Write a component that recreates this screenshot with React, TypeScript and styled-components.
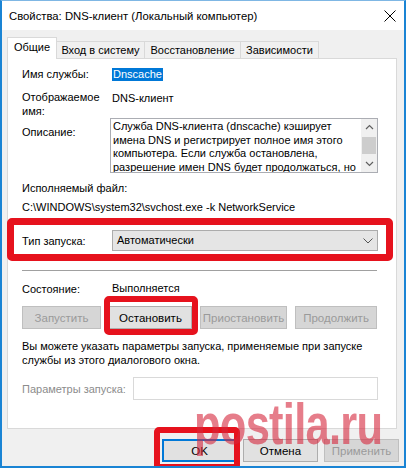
import React from "react";
import styled, { createGlobalStyle } from "styled-components";

const GlobalStyle = createGlobalStyle`
  html, body {
    margin: 0;
    padding: 0;
    background: #ffffff;
  }
  body {
    font-family: "Liberation Sans", Arial, sans-serif;
    font-size: 11px;
    color: #000000;
  }
`;

const Window = styled.div`
  position: relative;
  width: 406px;
  height: 468px;
  box-sizing: border-box;
  border: 2px solid #1a84d4;
  border-top: 1px solid #7fb7e4;
  background: #f0f0f0;
  display: flex;
  flex-direction: column;
  overflow: hidden;
`;

const TitleBar = styled.div`
  height: 29px;
  background: #ffffff;
  display: flex;
  align-items: center;
  justify-content: space-between;
  padding: 0 8px 0 7px;
  font-size: 11.3px;
  flex-shrink: 0;
`;

const CloseIcon = styled.svg`
  width: 12px;
  height: 12px;
  margin-top: 1px;
`;

const Body = styled.div`
  flex: 1;
  display: flex;
  flex-direction: column;
  padding: 7px 7px 0 5px;
`;

const TabStrip = styled.div`
  display: flex;
  align-items: flex-end;
  height: 21px;
  padding-left: 1px;
`;

const Tab = styled.div<{ $active?: boolean; $w: number }>`
  width: ${(p) => p.$w}px;
  height: ${(p) => (p.$active ? 22 : 17)}px;
  box-sizing: border-box;
  border: 1px solid #d9d9d9;
  border-bottom: none;
  margin-left: -1px;
  margin-bottom: ${(p) => (p.$active ? -1 : 0)}px;
  background: ${(p) => (p.$active ? "#ffffff" : "#f0f0f0")};
  position: relative;
  z-index: ${(p) => (p.$active ? 2 : 1)};
  display: flex;
  align-items: center;
  justify-content: center;
  padding-bottom: ${(p) => (p.$active ? 3 : 0)}px;
  white-space: nowrap;
`;

const Panel = styled.div`
  width: 390px;
  height: 371px;
  box-sizing: border-box;
  background: #ffffff;
  border: 1px solid #d9d9d9;
  padding: 8px 0 0 14px;
  display: flex;
  flex-direction: column;
`;

const Row = styled.div<{ $mt?: number; $align?: string }>`
  position: relative;
  display: flex;
  align-items: ${(p) => p.$align || "center"};
  margin-top: ${(p) => p.$mt || 0}px;
  line-height: 15px;
  white-space: nowrap;
`;

const Label = styled.div<{ $w?: number; $muted?: boolean; $pt?: number }>`
  width: ${(p) => (p.$w === undefined ? 90 : p.$w)}px;
  flex-shrink: 0;
  line-height: 14px;
  padding-top: ${(p) => p.$pt || 0}px;
  color: ${(p) => (p.$muted ? "#8c8c8c" : "#000000")};
`;

const Value = styled.span<{ $mt?: number }>`
  line-height: 14px;
  margin-top: ${(p) => p.$mt || 0}px;
`;

const Selected = styled.span`
  background: #0078d7;
  color: #ffffff;
  line-height: 13px;
  padding: 0 1px;
`;

const TextBox = styled.div`
  position: relative;
  width: 268px;
  height: 55px;
  box-sizing: border-box;
  margin-left: -2px;
  border: 1px solid #abadb3;
  padding: 1px 18px 0 2px;
  overflow: hidden;
  line-height: 13.5px;
`;

const ScrollBar = styled.div`
  position: absolute;
  top: 0;
  right: 0;
  bottom: 0;
  width: 16px;
  background: #f0f0f0;
  display: flex;
  flex-direction: column;
  align-items: center;
`;

const ScrollArrow = styled.svg`
  width: 9px;
  height: 16px;
  flex-shrink: 0;
`;

const ScrollTrack = styled.div`
  flex: 1;
  width: 100%;
  display: flex;
  flex-direction: column;
  align-items: center;
`;

const Thumb = styled.div`
  width: 14px;
  height: 17px;
  margin-top: 2px;
  background: #cdcdcd;
`;

const Separator = styled.div<{ $mt: number }>`
  height: 1px;
  width: 355px;
  background: #a0a0a0;
  margin-top: ${(p) => p.$mt}px;
`;

const Combo = styled.div`
  width: 266px;
  height: 21px;
  box-sizing: border-box;
  border: 1px solid #acacac;
  background: #e5e5e5;
  display: flex;
  align-items: center;
  justify-content: space-between;
  padding: 0 4px 0 4px;
`;

const Chevron = styled.svg`
  width: 10px;
  height: 6px;
`;

const Marked = styled.div<{ $t: number; $r: number; $b: number; $l: number; $bw: number }>`
  position: relative;
  display: flex;
  align-items: center;

  &::after {
    content: "";
    position: absolute;
    top: ${(p) => p.$t}px;
    right: ${(p) => p.$r}px;
    bottom: ${(p) => p.$b}px;
    left: ${(p) => p.$l}px;
    border: ${(p) => p.$bw}px solid #e6121d;
    border-radius: 5px;
    pointer-events: none;
    z-index: 5;
  }
`;

const ButtonRow = styled.div<{ $mt: number }>`
  display: flex;
  justify-content: space-between;
  width: 355px;
  margin-top: ${(p) => p.$mt}px;
`;

const Button = styled.div<{ $w: number; $disabled?: boolean; $default?: boolean }>`
  width: ${(p) => p.$w}px;
  height: 23px;
  box-sizing: border-box;
  border: 1px solid
    ${(p) => (p.$default ? "#0078d7" : p.$disabled ? "#bfbfbf" : "#adadad")};
  box-shadow: ${(p) => (p.$default ? "inset 0 0 0 1px #0078d7" : "none")};
  background: ${(p) => (p.$disabled ? "#d6d6d6" : "#e1e1e1")};
  color: ${(p) => (p.$disabled ? "#9a9a9a" : "#000000")};
  display: flex;
  align-items: center;
  justify-content: center;
  white-space: nowrap;
  font-size: 11.5px;
`;

const Paragraph = styled.div<{ $mt: number }>`
  margin-top: ${(p) => p.$mt}px;
  line-height: 14px;
`;

const Input = styled.div`
  width: 245px;
  height: 23px;
  box-sizing: border-box;
  border: 1px solid #d9d9d9;
  background: #ffffff;
`;

const Footer = styled.div`
  display: flex;
  justify-content: flex-end;
  gap: 6px;
  margin: 10px -2px 0 0;
`;

const Watermark = styled.div`
  position: absolute;
  left: 192px;
  top: 394px;
  font-family: "Liberation Sans", Arial, sans-serif;
  font-weight: 700;
  font-size: 58px;
  line-height: 1;
  letter-spacing: -1px;
  color: rgba(214, 38, 60, 0.6);
  transform: scaleX(0.75);
  transform-origin: left top;
  pointer-events: none;
  z-index: 10;
  white-space: nowrap;
`;

const descLines = [
  "Служба DNS-клиента (dnscache) кэширует",
  "имена DNS и регистрирует полное имя этого",
  "компьютера. Если служба остановлена,",
  "разрешение имен DNS будет продолжаться, но",
];

function App() {
  return (
    <>
      <GlobalStyle />
      <Window>
        <TitleBar>
          <span>Свойства: DNS-клиент (Локальный компьютер)</span>
          <CloseIcon viewBox="0 0 12 12">
            <path d="M0.5 0.5 L11.5 11.5 M11.5 0.5 L0.5 11.5" stroke="#000" strokeWidth="1" fill="none" />
          </CloseIcon>
        </TitleBar>
        <Body>
          <TabStrip>
            <Tab $active $w={50}>Общие</Tab>
            <Tab $w={89}>Вход в систему</Tab>
            <Tab $w={97}>Восстановление</Tab>
            <Tab $w={79}>Зависимости</Tab>
          </TabStrip>
          <Panel>
            <Row>
              <Label>Имя службы:</Label>
              <Selected>Dnscache</Selected>
            </Row>
            <Row $mt={9} $align="flex-start">
              <Label>
                Отображаемое
                <br />
                имя:
              </Label>
              <Value $mt={1}>DNS-клиент</Value>
            </Row>
            <Row $mt={0} $align="flex-start">
              <Label $pt={7}>Описание:</Label>
              <TextBox>
                {descLines.map((l) => (
                  <div key={l}>{l}</div>
                ))}
                <ScrollBar>
                  <ScrollArrow viewBox="0 0 9 16">
                    <path d="M1 10 L4.5 6.5 L8 10" stroke="#606060" strokeWidth="1.2" fill="none" />
                  </ScrollArrow>
                  <ScrollTrack>
                    <Thumb />
                  </ScrollTrack>
                  <ScrollArrow viewBox="0 0 9 16">
                    <path d="M1 6 L4.5 9.5 L8 6" stroke="#606060" strokeWidth="1.2" fill="none" />
                  </ScrollArrow>
                </ScrollBar>
              </TextBox>
            </Row>
            <Row $mt={8}>
              <Label $w={200}>Исполняемый файл:</Label>
            </Row>
            <Row $mt={5}>C:\WINDOWS\system32\svchost.exe -k NetworkService</Row>
            <Row $mt={15}>
              <Marked $t={-12} $r={-15} $b={-10} $l={-15} $bw={7}>
                <Label>Тип запуска:</Label>
                <Combo>
                  <span>Автоматически</span>
                  <Chevron viewBox="0 0 10 6">
                    <path d="M0.5 0.5 L5 5 L9.5 0.5" stroke="#555" strokeWidth="1" fill="none" />
                  </Chevron>
                </Combo>
              </Marked>
            </Row>
            <Separator $mt={19} />
            <Row $mt={10}>
              <Label>Состояние:</Label>
              <span>Выполняется</span>
            </Row>
            <ButtonRow $mt={10}>
              <Button $w={79} $disabled>
                Запустить
              </Button>
              <Marked $t={-10} $r={-6} $b={-6} $l={-5} $bw={6}>
                <Button $w={83}>Остановить</Button>
              </Marked>
              <Button $w={87} $disabled>
                Приостановить
              </Button>
              <Button $w={82} $disabled>
                Продолжить
              </Button>
            </ButtonRow>
            <Paragraph $mt={10}>
              Вы можете указать параметры запуска, применяемые при запуске
              <br />
              службы из этого диалогового окна.
            </Paragraph>
            <Row $mt={10}>
              <Label $w={111} $muted>
                Параметры запуска:
              </Label>
              <Input />
            </Row>
          </Panel>
          <Footer>
            <Marked $t={-12} $r={-3} $b={-8} $l={-8} $bw={6}>
              <Button $w={75} $default>
                OK
              </Button>
            </Marked>
            <Button $w={75}>Отмена</Button>
            <Button $w={75} $disabled>
              Применить
            </Button>
          </Footer>
        </Body>
        <Watermark>postila.ru</Watermark>
      </Window>
    </>
  );
}

export default App;
